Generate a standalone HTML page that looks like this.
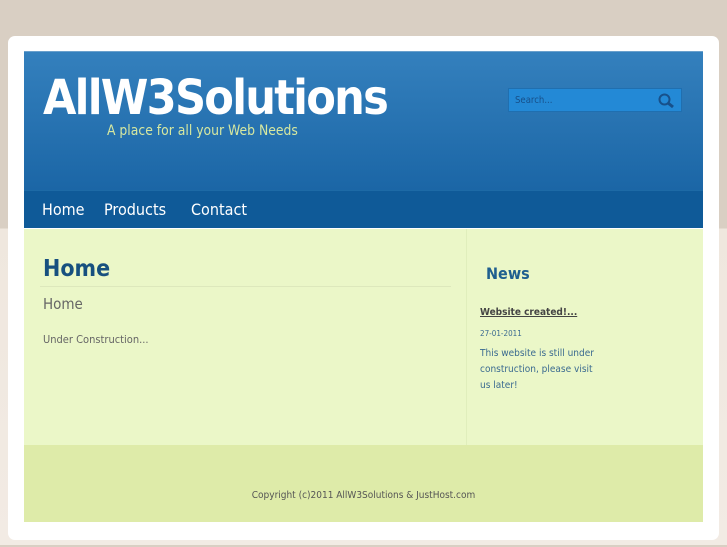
<!DOCTYPE html>
<html><head><style>
body{margin:0;width:727px;height:545px;overflow:hidden;font-family:"DejaVu Sans Condensed","DejaVu Sans","Liberation Sans",sans-serif;background:linear-gradient(#d9cfc3 0,#d9cfc3 228px,#efe7de 229px,#f2ebe4 545px);position:relative}
.box{position:absolute;left:8px;top:36px;width:711px;height:504px;background:#fff;border-radius:7px}
.hdr{position:absolute;left:24px;top:51px;width:679px;height:139px;background:linear-gradient(#3480bd,#1b66a6);border-top:1px solid #6aa0cc;box-sizing:border-box}
.title{position:absolute;left:19px;top:18px;color:#fff;font-weight:bold;font-size:48px;letter-spacing:-1.75px;white-space:nowrap}
.tag{position:absolute;left:83px;top:71px;color:#d6e8a0;font-size:13.8px}
.search{position:absolute;left:484px;top:36px;width:174px;height:24px;background:#2389d6;border:1px solid #1f6fb0;box-sizing:border-box;color:#17508a;font-size:9.5px;line-height:24px;padding-left:6px}
.nav{position:absolute;left:24px;top:190px;width:679px;height:38px;background:#0f5a98;border-top:1px solid #1d6aa6;box-sizing:border-box}
.nav span{position:absolute;top:9px;color:#fff;font-size:16px}
.main{position:absolute;left:24px;top:229px;width:679px;height:216px;background:#ebf7c8}
.div{position:absolute;left:442px;top:0;width:1px;height:216px;background:#e0eebc}
.foot{position:absolute;left:24px;top:445px;width:679px;height:77px;background:#deeba9;font-size:10px;color:#555;text-align:center;line-height:102px}
</style></head><body>
<div class="box"></div>
<div class="hdr">
<div class="title">AllW3Solutions</div>
<div class="tag">A place for all your Web Needs</div>
<div class="search">Search...
<svg style="position:absolute;right:6px;top:4px" width="17" height="16"><circle cx="6.5" cy="6.5" r="5" fill="none" stroke="#17508a" stroke-width="2"/><line x1="10" y1="10" x2="15" y2="14" stroke="#17508a" stroke-width="3"/></svg></div>
</div>
<div class="nav"><span style="left:18px">Home</span><span style="left:80px">Products</span><span style="left:167px">Contact</span></div>
<div class="main">
<div style="position:absolute;left:19px;top:27px;font-size:23px;font-weight:bold;color:#17507f">Home</div>
<div style="position:absolute;left:16px;top:57px;width:411px;height:1px;background:#dde8bc"></div>
<div style="position:absolute;left:19px;top:66px;font-size:15px;color:#666">Home</div>
<div style="position:absolute;left:19px;top:104px;font-size:11px;color:#666">Under Construction...</div>
<div class="div"></div>
<div style="position:absolute;left:462px;top:35px;font-size:16px;font-weight:bold;color:#1f5f8f">News</div>
<div style="position:absolute;left:456px;top:78px;font-size:10px;font-weight:bold;color:#444;text-decoration:underline">Website created!...</div>
<div style="position:absolute;left:456px;top:100px;font-size:8px;color:#3a6a90">27-01-2011</div>
<div style="position:absolute;left:456px;top:117px;font-size:10px;line-height:16px;color:#3a6a90;width:122px">This website is still under construction, please visit us later!</div>
</div>
<div class="foot">Copyright (c)2011 AllW3Solutions &amp; JustHost.com</div>
</body></html>
